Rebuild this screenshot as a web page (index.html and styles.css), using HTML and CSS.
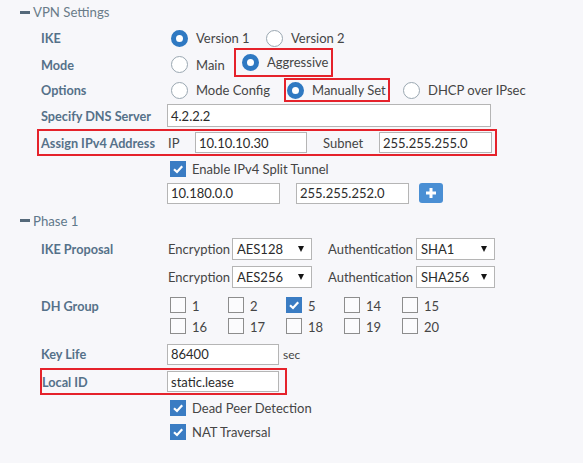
FILE: index.html
```html
<!DOCTYPE html>
<html>
<head>
<meta charset="utf-8">
<link rel="stylesheet" href="styles.css">
</head>
<body>
<div class="page">
  <div class="sec-head h-vpn"><span class="dash"></span>VPN Settings</div>

  <div class="row r-ike">
    <div class="lbl">IKE</div>
    <div class="ctl radios">
      <div class="opt w-v1"><span class="radio on"></span>Version 1</div>
      <div class="opt"><span class="radio"></span>Version 2</div>
    </div>
  </div>

  <div class="row r-mode">
    <div class="lbl">Mode</div>
    <div class="ctl radios">
      <div class="opt w-main"><span class="radio"></span>Main</div>
      <div class="opt hl hl-aggr"><span class="radio on"></span>Aggressive</div>
    </div>
  </div>

  <div class="row r-opts">
    <div class="lbl">Options</div>
    <div class="ctl radios">
      <div class="opt w-mc"><span class="radio"></span>Mode Config</div>
      <div class="opt hl hl-man"><span class="radio on"></span>Manually Set</div>
      <div class="opt dhcp"><span class="radio"></span>DHCP over IPsec</div>
    </div>
  </div>

  <div class="row r-dns">
    <div class="lbl">Specify DNS Server</div>
    <div class="ctl">
      <div class="input w-dns">4.2.2.2</div>
    </div>
  </div>

  <div class="row r-assign hlrow">
    <div class="lbl">Assign IPv4 Address</div>
    <div class="ctl">
      <span class="pre w-ip">IP</span>
      <div class="input w-112">10.10.10.30</div>
      <span class="pre w-subnet">Subnet</span>
      <div class="input w-113">255.255.255.0</div>
    </div>
  </div>

  <div class="row r-split">
    <div class="lbl"></div>
    <div class="ctl">
      <div class="check-opt"><span class="cb on"><svg viewBox="0 0 16 16"><polyline points="4,8.2 7,11 12.2,5.2"/></svg></span>Enable IPv4 Split Tunnel</div>
    </div>
  </div>

  <div class="row r-tunnel">
    <div class="lbl"></div>
    <div class="ctl">
      <div class="input w-113">10.180.0.0</div>
      <div class="input w-113 gap16">255.255.252.0</div>
      <div class="plus"><svg viewBox="0 0 24 20"><rect x="7" y="8.5" width="10" height="3"/><rect x="10.5" y="5" width="3" height="10"/></svg></div>
    </div>
  </div>

  <div class="sec-head h-phase"><span class="dash"></span>Phase 1</div>

  <div class="row r-prop1">
    <div class="lbl">IKE Proposal</div>
    <div class="ctl">
      <span class="pre w-enc">Encryption</span>
      <div class="select w-sel1">AES128<span class="arrow"></span></div>
      <span class="pre w-auth">Authentication</span>
      <div class="select w-sel2">SHA1<span class="arrow"></span></div>
    </div>
  </div>

  <div class="row r-prop2">
    <div class="lbl"></div>
    <div class="ctl">
      <span class="pre w-enc">Encryption</span>
      <div class="select w-sel1">AES256<span class="arrow"></span></div>
      <span class="pre w-auth">Authentication</span>
      <div class="select w-sel2">SHA256<span class="arrow"></span></div>
    </div>
  </div>

  <div class="row r-dh">
    <div class="lbl">DH Group</div>
    <div class="ctl dh-grid">
      <div class="check-opt"><span class="cb"></span>1</div>
      <div class="check-opt"><span class="cb"></span>2</div>
      <div class="check-opt"><span class="cb on"><svg viewBox="0 0 16 16"><polyline points="4,8.2 7,11 12.2,5.2"/></svg></span>5</div>
      <div class="check-opt"><span class="cb"></span>14</div>
      <div class="check-opt"><span class="cb"></span>15</div>
      <div class="check-opt"><span class="cb"></span>16</div>
      <div class="check-opt"><span class="cb"></span>17</div>
      <div class="check-opt"><span class="cb"></span>18</div>
      <div class="check-opt"><span class="cb"></span>19</div>
      <div class="check-opt"><span class="cb"></span>20</div>
    </div>
  </div>

  <div class="row r-key">
    <div class="lbl">Key Life</div>
    <div class="ctl">
      <div class="input w-112">86400</div>
      <span class="unit">sec</span>
    </div>
  </div>

  <div class="row r-local hlrow">
    <div class="lbl">Local ID</div>
    <div class="ctl">
      <div class="input w-112">static.lease</div>
    </div>
  </div>

  <div class="row r-dpd">
    <div class="lbl"></div>
    <div class="ctl">
      <div class="check-opt"><span class="cb on"><svg viewBox="0 0 16 16"><polyline points="4,8.2 7,11 12.2,5.2"/></svg></span>Dead Peer Detection</div>
    </div>
  </div>

  <div class="row r-nat">
    <div class="lbl"></div>
    <div class="ctl">
      <div class="check-opt"><span class="cb on"><svg viewBox="0 0 16 16"><polyline points="4,8.2 7,11 12.2,5.2"/></svg></span>NAT Traversal</div>
    </div>
  </div>
</div>
</body>
</html>
```

FILE: styles.css
```css
* { box-sizing: border-box; }

html, body {
  margin: 0;
  background: #f7f7fa;
}

body {
  font-family: Lato, "Open Sans", sans-serif;
  font-size: 13px;
  color: #454545;
  white-space: nowrap;
}

.page {
  padding-left: 20px;
  width: 583px;
  height: 463px;
  overflow: hidden;
}

/* section headings */
.sec-head {
  display: flex;
  align-items: center;
  font-size: 13.2px;
  color: #6a7c89;
}
.h-vpn { height: 24px; }
.h-phase { height: 31px; color: #5f788b; }

.dash {
  width: 10px;
  height: 3px;
  background: #55697a;
  margin-right: 3px;
}

/* rows */
.row {
  display: flex;
  align-items: center;
  padding-left: 21px;
}
.lbl {
  width: 126px;
  flex: none;
  font-weight: 700;
  font-size: 12.7px;
  color: #557189;
}
.ctl {
  display: flex;
  align-items: center;
}

.r-ike { height: 28px; }
.r-mode { height: 25px; }
.r-opts { height: 26px; }
.r-dns { height: 25px; }
.r-split { height: 25px; }
.r-tunnel { height: 24px; }
.r-prop1 { height: 26px; }
.r-prop2 { height: 30px; }
.r-key { height: 26px; }
.r-dpd { height: 25px; }
.r-nat { height: 24px; }

/* highlighted rows */
.hlrow {
  border: 2px solid #e5222b;
}
.r-assign {
  height: 27px;
  margin-top: 1px;
  margin-left: 17px;
  width: 460px;
  padding-left: 2px;
}
.r-local {
  height: 27px;
  margin-top: 1px;
  margin-left: 20px;
  width: 247px;
  padding-left: 0;
}
.r-local .lbl { width: 125px; }

/* radios */
.radios { padding-left: 4px; }
.opt {
  display: flex;
  align-items: center;
  gap: 8px;
  flex: none;
}
.w-v1 { width: 95px; }
.w-main { width: 63px; }
.w-mc { width: 113px; }
.dhcp { margin-left: 13px; }

.hl {
  border: 2px solid #e5222b;
}
.hl-aggr {
  width: 99px;
  height: 29px;
  padding-left: 6px;
  align-self: flex-start;
  margin-top: -5px;
}
.hl-man {
  width: 106px;
  height: 24px;
  padding-left: 1px;
}

.radio {
  width: 17px;
  height: 17px;
  border-radius: 50%;
  border: 1.5px solid #9aa7b1;
  background: #fff;
  flex: none;
}
.radio.on {
  border: 5px solid #2f79c2;
}

/* inputs */
.input {
  height: 21px;
  border: 1px solid #b5b5b5;
  background: #fff;
  padding-left: 3px;
  display: flex;
  align-items: center;
  color: #2b2b2b;
  font-size: 13px;
  flex: none;
}
.w-dns { width: 324px; height: 23px; }
.w-112 { width: 112px; }
.w-113 { width: 113px; }
.gap16 { margin-left: 16px; }

.pre {
  flex: none;
  color: #454545;
}
.w-ip { width: 28px; padding-left: 1px; }
.w-subnet { width: 56px; margin-left: 16px; }
.w-enc { width: 65px; padding-left: 1px; }
.w-auth { width: 88px; margin-left: 16px; }

.unit {
  margin-left: 4px;
  font-size: 12px;
}

/* selects */
.select {
  height: 22px;
  border: 1px solid #b5b5b5;
  background: #fff;
  display: flex;
  align-items: center;
  justify-content: space-between;
  padding: 0 7px 0 4px;
  color: #2b2b2b;
  flex: none;
}
.w-sel1 { width: 80px; }
.w-sel2 { width: 79px; }
.arrow {
  width: 0;
  height: 0;
  border-left: 3.5px solid transparent;
  border-right: 3.5px solid transparent;
  border-top: 6px solid #151515;
}

/* plus button */
.plus {
  width: 24px;
  height: 20px;
  margin-left: 10px;
  background: #4a8fd4;
  border-radius: 3px;
}
.plus svg {
  display: block;
  width: 24px;
  height: 20px;
  fill: #fff;
}

/* checkboxes */
.check-opt {
  display: flex;
  align-items: center;
  gap: 6px;
}
.r-split .ctl, .r-dpd .ctl, .r-nat .ctl { padding-left: 3px; }

.cb {
  width: 16px;
  height: 16px;
  border: 1px solid #8d8d8d;
  background: #fbfbfd;
  flex: none;
}
.cb.on {
  border: none;
  background: #3a7cc3;
}
.cb svg {
  display: block;
  width: 16px;
  height: 16px;
  fill: none;
  stroke: #fff;
  stroke-width: 2.2;
}

/* DH group grid */
.r-dh {
  align-items: flex-start;
  padding-top: 5px;
  padding-bottom: 7px;
}
.r-dh .lbl {
  line-height: 16px;
  margin-top: 1px;
}
.dh-grid {
  display: grid;
  grid-template-columns: repeat(5, 58px);
  row-gap: 5px;
  padding-left: 3px;
}
.dh-grid .check-opt {
  height: 16px;
  align-items: flex-end;
  line-height: 1;
}
```
